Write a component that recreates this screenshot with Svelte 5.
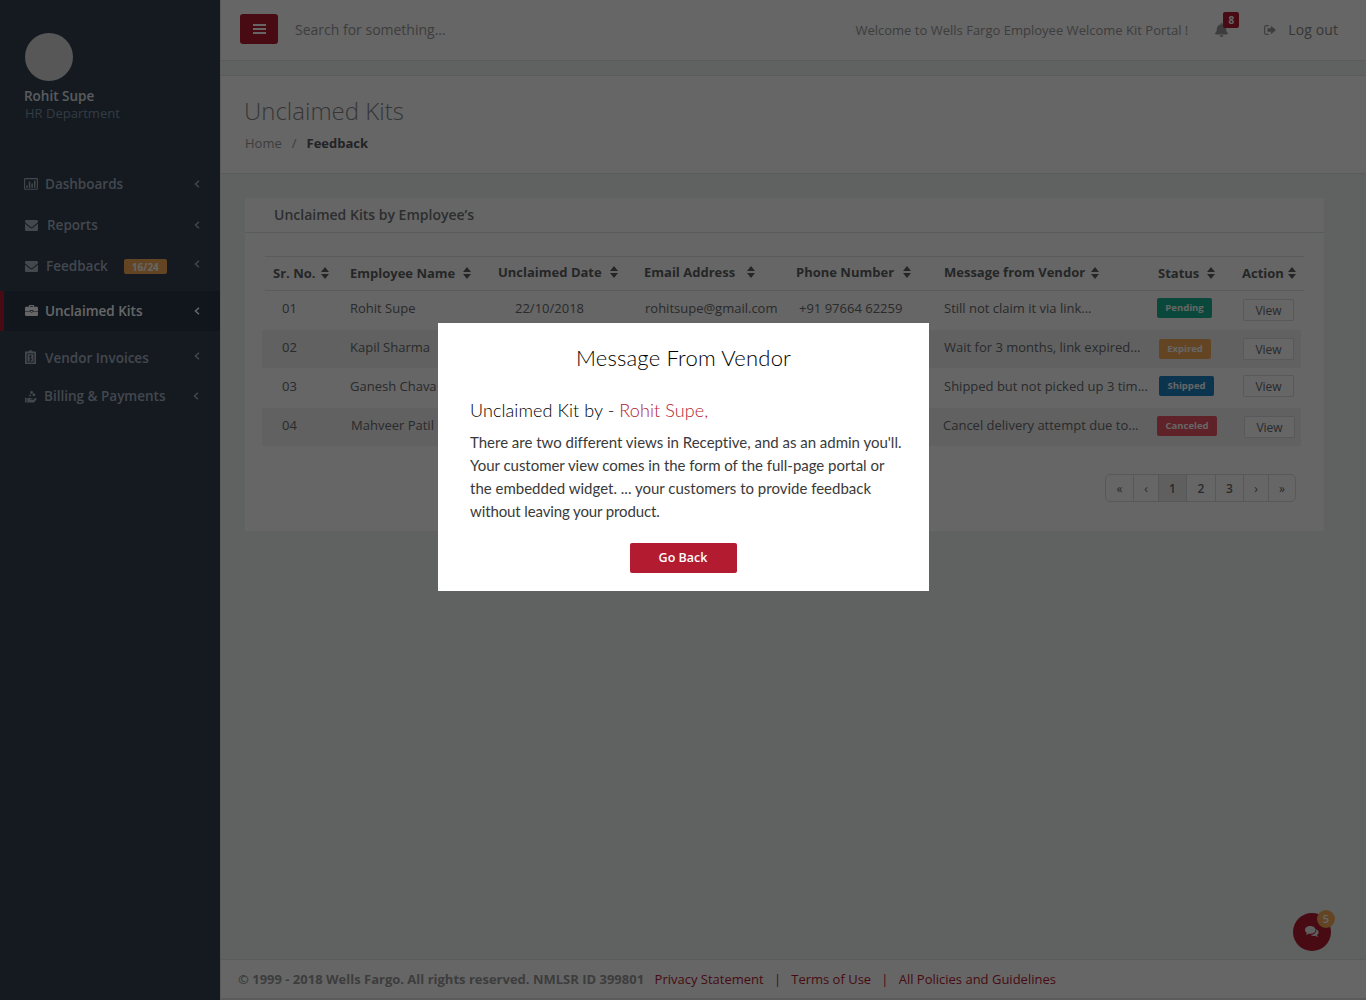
<script>
  const nav = [
    { id: 'dash', icon: 'chart', label: 'Dashboards' },
    { id: 'reports', icon: 'mail', label: 'Reports' },
    { id: 'feedback', icon: 'mail', label: 'Feedback', badge: '16/24' },
    { id: 'kits', icon: 'case', label: 'Unclaimed Kits' },
    { id: 'vendor', icon: 'clip', label: 'Vendor Invoices' },
    { id: 'billing', icon: 'hand', label: 'Billing & Payments' },
  ];
  const columns = ['Sr. No.', 'Employee Name', 'Unclaimed Date', 'Email Address', 'Phone Number', 'Message from Vendor', 'Status', 'Action'];
  const rows = [
    { no: '01', name: 'Rohit Supe', date: '22/10/2018', email: 'rohitsupe@gmail.com', phone: '+91 97664 62259', message: 'Still not claim it via link...', status: 'Pending' },
    { no: '02', name: 'Kapil Sharma', message: 'Wait for 3 months, link expired...', status: 'Expired' },
    { no: '03', name: 'Ganesh Chava', message: 'Shipped but not picked up 3 tim...', status: 'Shipped' },
    { no: '04', name: 'Mahveer Patil', message: 'Cancel delivery attempt due to...', status: 'Canceled' },
  ];
  const pages = ['«', '‹', '1', '2', '3', '›', '»'];
</script>

<div class="app">
  <aside>
    <div class="avatar"></div>
    <div class="user">Rohit Supe</div>
    <div class="dept">HR Department</div>
    <nav>
      {#each nav as item}
        <a class="item {item.id}">
          <span class="ico">
            {#if item.icon === 'chart'}
              <svg width="14" height="12" viewBox="0 0 14 12"><rect x=".6" y=".6" width="12.8" height="10.6" rx=".6" fill="none" stroke="currentColor" stroke-width="1.1" /><path d="M2.2 7.4h1.6v2.3H2.2zM4.8 3.6h1.5v6.1H4.8zM7.4 5.4h1.5v4.3H7.4zM10 2.6h1.5v7.1H10z" fill="currentColor" /></svg>
            {:else if item.icon === 'mail'}
              <svg width="13" height="11" viewBox="0 64 512 384" preserveAspectRatio="none"><path fill="currentColor" d="M502.3 190.8c3.9-3.1 9.7-.2 9.7 4.7V400c0 26.5-21.5 48-48 48H48c-26.5 0-48-21.5-48-48V195.6c0-5 5.7-7.8 9.7-4.7 22.4 17.4 52.1 39.5 154.1 113.6 21.1 15.4 56.7 47.8 92.2 47.6 35.7.3 72-32.8 92.3-47.6 102-74.1 131.6-96.3 154-113.7zM256 320c23.2.4 56.6-29.2 73.4-41.4 132.7-96.3 142.8-104.7 173.4-128.7 5.8-4.5 9.2-11.5 9.2-18.9v-19c0-26.5-21.5-48-48-48H48c-26.5 0-48 21.5-48 48v19c0 7.4 3.4 14.3 9.2 18.9 30.6 23.9 40.7 32.4 173.4 128.7 16.8 12.2 50.2 41.8 73.4 41.4z" /></svg>
            {:else if item.icon === 'case'}
              <svg width="13" height="11" viewBox="0 0 13 11"><path fill="currentColor" fill-rule="evenodd" d="M3.8 1.8V.9q0-.9.9-.9h3.6q.9 0 .9.9v.9h2.6Q13 1.8 13 3v3H8.3V5.3H4.7V6H0V3Q0 1.8 1.2 1.8zM5 1.8h3V1.1H5zM0 6.6h4.7q.3 1 1.8 1t1.800-1H13V9.800q0 1.200-1.200 1.200H1.200Q0 11 0 9.800zM5.500 6h2v.9h-2z" /></svg>
            {:else if item.icon === 'clip'}
              <svg width="11" height="14" viewBox="0 0 11 14"><path fill="currentColor" fill-rule="evenodd" d="M0 1.600h2.800V1.200H4Q4.300 0 5.500 0T7 1.200h1.200v.4H11V14H0zM1.700 3.400v9h7.600v-9z" /><path fill="currentColor" d="M2.500 4.200h6v7.400h-6z" /><path d="M6.800 6.300Q5.500 5.500 4.600 6.300T5.500 8 6.400 9.700 4.100 9.900M5.500 4.800v6.300" fill="none" stroke="#324150" stroke-width=".8" /></svg>
            {:else}
              <svg width="12" height="12" viewBox="0 0 12 12"><g fill="currentColor"><circle cx="6.600" cy="1.500" r="1.400" /><circle cx="8.900" cy="3.700" r="1.500" /><circle cx="5.100" cy="4.400" r="1" /><path d="M0 6.800h1.600v4.700H0zM2.200 7.200q1.800-1.100 3.500.1h1.700q.8.500 0 1.200H5v.5h3l2.300-1.900q1-.5 1.600.4L9.200 11.500H2.200z" /></g></svg>
            {/if}
          </span>
          <span class="lbl">{item.label}</span>
          {#if item.badge}<span class="count">{item.badge}</span>{/if}
          <svg class="chev" width="6" height="8" viewBox="0 0 6 8"><path d="M5 .8 1.500 4 5 7.200" fill="none" stroke="currentColor" stroke-width="1.500" /></svg>
        </a>
      {/each}
    </nav>
  </aside>

  <main>
    <header>
      <button class="menu" aria-label="Menu"><i></i><i></i><i></i></button>
      <span class="search">Search for something...</span>
      <span class="welcome">Welcome to Wells Fargo Employee Welcome Kit Portal !</span>
      <span class="bell">
        <svg width="13" height="14" viewBox="0 0 448 512" preserveAspectRatio="none"><path fill="currentColor" d="M224 512c35.320 0 63.970-28.650 63.970-64H160.030c0 35.350 28.650 64 63.970 64zm215.390-149.710c-19.320-20.760-55.470-51.990-55.470-154.290 0-77.700-54.480-139.900-127.940-155.160V32c0-17.670-14.320-32-31.980-32s-31.980 14.330-31.980 32v20.840C118.560 68.100 64.080 130.300 64.080 208c0 102.300-36.150 133.530-55.470 154.290-6 6.450-8.660 14.160-8.610 21.710.11 16.400 12.980 32 32.100 32h383.800c19.120 0 32-15.600 32.100-32 .05-7.550-2.610-15.270-8.610-21.710z" /></svg>
        <b>8</b>
      </span>
      <svg class="exit" width="12" height="10" viewBox="0 0 12 10"><path d="M4.600.6H2.300Q.6.600.6 2.300v5.400q0 1.700 1.700 1.700h2.300" fill="none" stroke="currentColor" stroke-width="1.100" /><path d="M3.500 3.200h3.400V.7L12 5 6.900 9.300V6.800H3.500z" fill="currentColor" /></svg>
      <span class="logout">Log out</span>
    </header>

    <section class="title">
      <h1>Unclaimed Kits</h1>
      <div class="crumbs"><span>Home</span><span>/</span><b>Feedback</b></div>
    </section>

    <section class="card">
      <h2>Unclaimed Kits by Employee’s</h2>
      <div class="thead">
        {#each columns as column}
          <div class="th">
            <span>{column}</span>
            <svg width="8" height="12" viewBox="0 0 8 12"><path d="M4 0 8 5H0zM4 12 0 7h8z" fill="currentColor" /></svg>
          </div>
        {/each}
      </div>
      {#each rows as row, i}
        <div class="row r{i}">
          <span>{row.no}</span>
          <span class="name">{row.name}</span>
          <span>{row.date ?? ''}</span>
          <span>{row.email ?? ''}</span>
          <span>{row.phone ?? ''}</span>
          <span class="msg">{row.message}</span>
          <span class="status"><em class={row.status.toLowerCase()}>{row.status}</em></span>
          <span class="action"><button>View</button></span>
        </div>
      {/each}
      <div class="pager">
        {#each pages as page}
          <span class:num={/\d/.test(page)} class:on={page === '1'}>{page}</span>
        {/each}
      </div>
    </section>

    <footer>
      <b>© 1999 - 2018 Wells Fargo. All rights reserved. NMLSR ID 399801</b>
      <a>Privacy Statement</a><a class="sep">|</a><a>Terms of Use</a><a class="sep">|</a><a>All Policies and Guidelines</a>
    </footer>
  </main>

  <div class="chat">
    <svg width="14" height="12" viewBox="0 0 14 12"><g fill="currentColor"><path d="M5.300 0C8.200 0 10.600 1.700 10.600 3.900S8.200 7.800 5.300 7.800q-.8 0-1.500-.1Q2.600 8.800.9 8.900q.8-.8 1-1.900Q0 5.800 0 3.900C0 1.700 2.400 0 5.300 0z" /><path d="M11.500 3.200Q13.600 4.400 13.600 6.300q0 1.700-1.500 2.800.2 1 1 1.800-1.800-.1-2.900-1.100-2.500.4-4.600-.9 5.300-.1 5.900-5.700z" /></g></svg>
    <b>5</b>
  </div>

  <div class="overlay">
    <div class="modal">
      <h3>Message From Vendor</h3>
      <h4>Unclaimed Kit by - <span>Rohit Supe,</span></h4>
      <p>
        <span class="l1">There are two different views in Receptive, and as an admin you'll.</span>
        <span class="l2">Your customer view comes in the form of the full-page portal or</span>
        <span class="l3">the embedded widget. ... your customers to provide feedback</span>
        <span class="l4">without leaving your product.</span>
      </p>
      <button>Go Back</button>
    </div>
  </div>
</div>

<style>
  :global(body) { margin: 0; overflow: hidden; }
  .app, .app * { box-sizing: border-box; }
  .app {
    position: relative; display: flex; width: 1366px; height: 1000px; overflow: hidden;
    font: 13px/18px "Open Sans", "Noto Sans", sans-serif; color: #676a6c; white-space: nowrap;
  }
  svg { display: block; flex: none; }
  h1, h2, h3, h4, p { margin: 0; font-weight: 400; }
  button { font: inherit; border: 0; padding: 0; }

  aside { width: 220px; background: #324150; padding-top: 33px; color: #a7b1c2; }
  .avatar { width: 48px; height: 48px; margin-left: 25px; border-radius: 50%; background: #d9d9d9; }
  .user { margin: 6px 0 -1px 24px; font-size: 13.5px; font-weight: 600; color: #dfe4ed; }
  .dept { margin-left: 25px; color: #8095a8; }
  nav { display: flex; flex-direction: column; margin-top: 42px; }
  .item { display: flex; align-items: center; height: 41px; padding: 0 20px 0 25px; font-size: 13.5px; font-weight: 600; }
  .lbl { margin-bottom: 1px; }
  .ico { display: flex; width: 20px; }
  .chev { margin-left: auto; }
  .dash { padding-left: 24px; }
  .dash .ico { width: 21px; }
  .dash .ico, .dash .chev, .reports .chev { margin-bottom: 1px; }
  .reports .ico { width: 22px; }
  .feedback .ico { width: 21px; }
  .feedback .chev { margin-bottom: 5px; }
  .count { width: 43px; height: 15px; margin-left: 16px; border-radius: 2px; background: #f8ac59; font-size: 10px; font-weight: 700; line-height: 16px; text-align: center; color: #fff; }
  .kits { height: 40px; margin: 4px 0 6px; padding-left: 21px; border-left: 4px solid #b31b30; background: #293846; color: #fff; }
  .kits .ico { margin-bottom: 2px; }
  .vendor .chev, .billing .chev { margin-bottom: 2px; }
  .vendor { height: 40px; }
  .vendor .lbl { margin-bottom: -1px; }
  .billing { height: 39px; padding-right: 21px; }
  .billing .ico { width: 19px; }

  main { flex: 1; display: flex; flex-direction: column; border-left: 1px solid #e4e8e6; background: #f0f5f2; }
  header { display: flex; align-items: center; height: 61px; padding: 0 28px 1px 19px; background: #fff; border-bottom: 1px solid #e2e7e4; color: #999; }
  .menu { display: flex; flex-direction: column; align-items: center; justify-content: center; gap: 2px; width: 38px; height: 30px; margin-bottom: 2px; border-radius: 3px; background: #b31b30; }
  .menu i { width: 13px; height: 2px; background: #fff; }
  .search { margin-left: 17px; font-size: 14px; }
  .welcome { margin-left: auto; letter-spacing: .01px; }
  .bell { position: relative; margin-left: 27px; }
  .bell b { position: absolute; left: 8px; top: -11px; width: 16px; height: 16px; border-radius: 2px; background: #b31b30; color: #fff; font-size: 10px; line-height: 16px; text-align: center; }
  .exit { margin-left: 36px; }
  .logout { margin-left: 12px; font-size: 14px; font-weight: 500; letter-spacing: .1px; color: #8a8a8a; }

  .title { height: 99px; margin-top: 14px; padding: 18px 24px; background: #fff; border: solid #e2e7e4; border-width: 1px 0; }
  h1 { font-size: 24px; line-height: 34px; font-weight: 300; color: #888; margin-left: -1px; }
  .crumbs { display: flex; gap: 10px; margin-top: 6px; color: #999; }
  .crumbs b { color: #55585a; font-weight: 700; }

  .card { width: 1079px; height: 333px; margin: 24px 0 0 24px; background: #fff; color: #676a6c; }
  h2 { height: 35px; padding: 8px 29px; border-bottom: 1px solid #e2e4e5; font-size: 14px; font-weight: 600; color: #707375; }
  .thead {
    display: grid; grid-template-columns: 48px 29px 113px 35px 112px 34px 103px 49px 107px 41px 147px 67px 49px 35px 46px auto;
    width: 1039px; height: 35px; margin: 23px 0 0 20px; padding: 6px 0 0 8px; border: solid #e2e4e5; border-width: 1px 0; font-weight: 700; color: #5c5f61;
  }
  .th { display: contents; }
  .th svg { margin-top: 3px; }
  .th:nth-child(1) span, .th:nth-child(2) span, .th:nth-child(7) span, .th:nth-child(8) span { margin-top: 1px; }
  .th:nth-child(1) svg, .th:nth-child(2) svg, .th:nth-child(6) svg, .th:nth-child(7) svg, .th:nth-child(8) svg { margin-top: 3.500px; }

  .row { display: grid; grid-template-columns: 68px 165px 130px 154px 145px 213px 86px auto; width: 1040px; height: 39px; margin-left: 17px; padding: 8px 0 0 20px; border-bottom: 1px solid #fff; }
  .r1, .r3 { background: #f2f2f2; width: 1039px; }
  .r3 .name { padding-left: 1px; }
  .r3 .msg { margin-left: -1px; }
  .status { margin-top: -1px; }
  em { display: block; width: 55px; height: 20px; border-radius: 2px; font-style: normal; font-size: 9.500px; font-weight: 700; line-height: 20px; text-align: center; color: #fff; }
  .pending { background: #1ab394; }
  .expired { width: 52px; margin: 2px 0 0 2px; background: #f8ac59; }
  .shipped { margin-left: 2px; background: #1c84c6; }
  .canceled { width: 60px; margin-top: 1px; background: #ed5565; }
  .action button { display: block; width: 51px; height: 22px; border: 1px solid #dedede; border-radius: 1px; background: #fff; color: #676a6c; font-size: 12px; line-height: 22px; }
  .r2 .action button { margin-top: -2px; }
  .r3 .action button { margin-left: 1px; }

  .pager { display: flex; width: 191px; height: 28px; margin: 27px 0 0 860px; border: 1px solid #ddd; border-radius: 5px; overflow: hidden; font-size: 12px; line-height: 27px; text-align: center; }
  .pager span { flex: none; width: 28px; border-right: 1px solid #ddd; }
  .pager span:nth-child(2), .pager span:nth-child(6) { width: 25px; }
  .pager span:nth-child(4) { width: 29px; }
  .pager span:last-child { width: 26px; border: 0; }
  .pager .num { font-weight: 600; }
  .pager .on { background: #eee; }

  footer { display: flex; height: 41px; margin-top: auto; padding: 10px 17px; border: solid #e2e4e5; border-width: 1px 0 2px; background: #fff; }
  footer b { font-weight: 700; color: #999; margin-right: 10.500px; }
  footer a { color: #b31b30; }
  footer .sep { width: 27.500px; text-align: center; }

  .chat { position: absolute; left: 1293px; top: 913px; display: flex; align-items: center; justify-content: center; width: 38px; height: 38px; border-radius: 50%; background: #b31b30; color: #eee; }
  .chat b { position: absolute; left: 24px; top: -3px; width: 18px; height: 18px; border-radius: 50%; background: #f8ac59; color: #fff; font-size: 11px; font-weight: 600; text-align: center; }

  .overlay { position: absolute; inset: 0; background: rgba(0, 0, 0, .6); }
  .modal { display: flex; flex-direction: column; width: 491px; height: 268px; margin: 323px 0 0 438px; padding: 20px 26px 0 32px; background: #fff; color: #3a3a3a; font-family: Lato, "Open Sans", sans-serif; }
  h3 { margin-left: -6px; font-size: 22px; font-weight: 300; line-height: 30px; text-align: center; letter-spacing: .2px; color: #000; }
  h4 { margin-top: 24px; font-size: 18px; font-weight: 300; line-height: 26px; letter-spacing: .08px; color: #000; }
  h4 span { color: #b31b30; }
  p { margin-top: 8px; font-size: 15px; line-height: 23px; }
  p span { display: block; }
  .l1 { letter-spacing: -.01px; }
  .l2 { letter-spacing: -.03px; }
  .l4 { letter-spacing: -.12px; }
  .modal button { width: 107px; height: 30px; margin: 20px 0 0 160px; padding-right: 1px; border-radius: 2px; background: #b31b30; color: #fff; font: 600 12.500px/28px "Open Sans", sans-serif; }
</style>
